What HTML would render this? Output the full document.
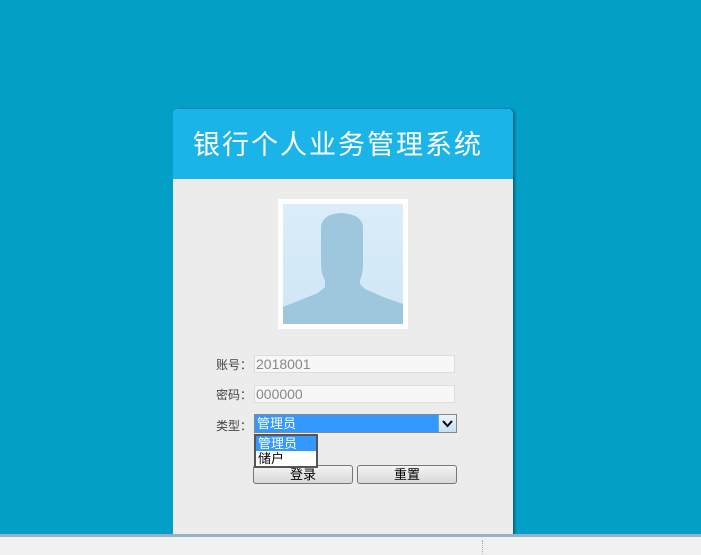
<!DOCTYPE html>
<html><head><meta charset="utf-8"><style>
body{margin:0;width:701px;height:555px;background:#049fc6;position:relative;overflow:hidden;font-family:"Liberation Sans","Noto Sans CJK SC",sans-serif}
.card{position:absolute;left:173px;top:109px;width:340px;height:430px;background:#ececec;border-radius:5px 5px 0 0;box-shadow:2px 0 2px rgba(0,0,0,.35);overflow:hidden}
.hd{height:70px;background:#1bb4e9;color:#fff;font-size:27px;line-height:72px;padding-left:20px;letter-spacing:2px}
.photo{position:absolute;left:105px;top:90px;width:120px;height:120px;border:5px solid #fff;background:linear-gradient(#daedf9,#cfe6f5)}
.lbl{position:absolute;left:43px;font-size:12px;color:#444}
.inp{position:absolute;left:81px;width:198px;height:16px;background:#f7f7f7;border:1px solid #ddd;font-size:14px;color:#888;line-height:16px;padding-left:1px}
.sel{position:absolute;left:81px;top:305px;width:199px;height:17px;border:1px solid #888;background:#3399ff;color:#fff;font-size:13px;line-height:17px;padding-left:2px;box-sizing:content-box}
.arr{position:absolute;right:0;top:0;width:17px;height:17px;background:linear-gradient(#eaf4fc,#c7dff2);border-left:1px solid #7aa}
.dd{position:absolute;left:81px;top:325px;width:60px;height:30px;border:2px solid #555;background:#fff;font-size:13px;line-height:15px}
.btn{position:absolute;top:356px;width:98px;height:17px;border:1px solid #777;border-radius:3px;background:linear-gradient(#f4f4f4,#d8d8d8);font-size:13px;text-align:center;line-height:17px;color:#000}
.bar{position:absolute;left:0;top:534px;width:701px;height:3px;background:#9aafc8}
.st{position:absolute;left:0;top:537px;width:701px;height:18px;background:#f1f1f1}
</style></head><body>
<div class="card">
<div class="hd">银行个人业务管理系统</div>
<div class="photo"><svg width="120" height="120" viewBox="0 0 120 120"><path fill="#9ec6dd" d="M0 103 L15 97 L35 89 L42 83 L42 76 Q38 70 38 60 L38 22 Q40 10 58 9 Q78 10 80 22 L80 60 Q80 70 77 76 L77 80 L82 85 L100 93 L120 100 L120 120 L0 120 Z"/></svg></div>
<div class="lbl" style="top:247px">账号：</div><div class="inp" style="top:246px">2018001</div>
<div class="lbl" style="top:277px">密码：</div><div class="inp" style="top:276px">000000</div>
<div class="lbl" style="top:308px">类型：</div>
<div class="sel">管理员<div class="arr"><svg width="17" height="17"><path d="M4 6 L8.5 11 L13 6" stroke="#000" stroke-width="2" fill="none"/></svg></div></div>
<div class="btn" style="left:80px">登录</div><div class="btn" style="left:184px">重置</div>
<div class="dd"><div style="background:#3399ff;color:#fff;padding-left:2px">管理员</div><div style="padding-left:2px">储户</div></div>
</div>
<div class="bar"></div><div class="st"><div style="position:absolute;left:482px;top:3px;height:14px;border-left:1px dotted #aaa"></div></div>
</body></html>
